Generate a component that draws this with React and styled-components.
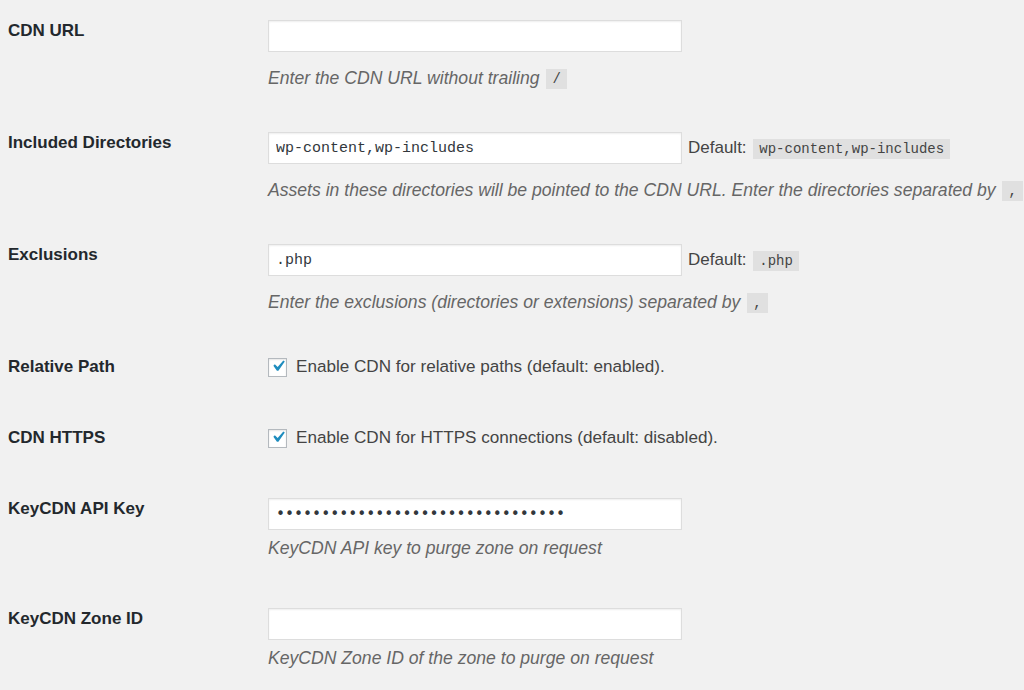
import React from "react";
import styled, { createGlobalStyle } from "styled-components";

const GlobalStyle = createGlobalStyle`
	html, body {
		margin: 0;
		padding: 0;
		background: #f1f1f1;
	}
	body {
		font-family: "Liberation Sans", Arial, sans-serif;
		color: #444;
	}
`;

export default function App() {
	return (
		<>
			<GlobalStyle />
			<FormTable>
				<Row pb={23}>
					<Label>CDN URL</Label>
					<Field>
						<Line>
							<TextInput type="text" value="" readOnly />
						</Line>
						<Description gap={15}>
							Enter the CDN URL without trailing <Code>/</Code>
						</Description>
					</Field>
				</Row>

				<Row pb={23}>
					<Label>Included Directories</Label>
					<Field>
						<Line>
							<TextInput type="text" value="wp-content,wp-includes" readOnly />
							<DefaultNote>
								Default: <Code>wp-content,wp-includes</Code>
							</DefaultNote>
						</Line>
						<Description gap={15}>
							Assets in these directories will be pointed to the CDN URL. Enter
							the directories separated by <Code>,</Code>
						</Description>
					</Field>
				</Row>

				<Row pb={23}>
					<Label>Exclusions</Label>
					<Field>
						<Line>
							<TextInput type="text" value=".php" readOnly />
							<DefaultNote>
								Default: <Code>.php</Code>
							</DefaultNote>
						</Line>
						<Description gap={15}>
							Enter the exclusions (directories or extensions) separated by{" "}
							<Code>,</Code>
						</Description>
					</Field>
				</Row>

				<Row pb={29}>
					<Label>Relative Path</Label>
					<CheckField>
						<Checkbox checked />
						Enable CDN for relative paths (default: enabled).
					</CheckField>
				</Row>

				<Row pb={29}>
					<Label>CDN HTTPS</Label>
					<CheckField>
						<Checkbox checked />
						Enable CDN for HTTPS connections (default: disabled).
					</CheckField>
				</Row>

				<Row pb={29}>
					<Label>KeyCDN API Key</Label>
					<Field>
						<Line>
							<TextInput
								type="password"
								value="a8f3c2e91b7d4f60a5e2c8d1b3f79e04"
								readOnly
							/>
						</Line>
						<Description gap={7}>KeyCDN API key to purge zone on request</Description>
					</Field>
				</Row>

				<Row pb={29}>
					<Label>KeyCDN Zone ID</Label>
					<Field>
						<Line>
							<TextInput type="text" value="" readOnly />
						</Line>
						<Description gap={7}>
							KeyCDN Zone ID of the zone to purge on request
						</Description>
					</Field>
				</Row>
			</FormTable>
		</>
	);
}

function Checkbox({ checked }) {
	return (
		<Box>
			{checked && (
				<Tick width="22" height="22" viewBox="0 0 20 20">
					<path
						d="M14.83 4.89l1.34.94-5.81 8.38H9.02L5.78 9.67l1.34-1.25 2.57 2.4z"
						fill="#1e8cbe"
					/>
				</Tick>
			)}
		</Box>
	);
}

const FormTable = styled.div`
	display: flex;
	flex-direction: column;
	padding-left: 8px;
`;

const Row = styled.div`
	display: grid;
	grid-template-columns: 260px 1fr;
	align-items: start;
	padding-bottom: ${(props) => props.pb}px;
`;

const Label = styled.div`
	padding-top: 20px;
	font-size: 17px;
	line-height: 22px;
	font-weight: bold;
	color: #23282d;
`;

const Field = styled.div`
	padding-top: 20px;
	display: flex;
	flex-direction: column;
`;

const Line = styled.div`
	display: flex;
	align-items: center;
	height: 32px;
`;

const TextInput = styled.input`
	box-sizing: border-box;
	width: 414px;
	height: 32px;
	margin: 0;
	padding: 0 7px;
	border: 1px solid #ddd;
	box-shadow: inset 0 1px 2px rgba(0, 0, 0, 0.07);
	background: #fff;
	font-family: "Liberation Mono", "DejaVu Sans Mono", monospace;
	font-size: 15px;
	color: #32373c;
	outline: none;

	&[type="password"] {
		font-family: "DejaVu Sans Mono", monospace;
		letter-spacing: 0;
	}
`;

const DefaultNote = styled.span`
	margin-left: 6px;
	font-size: 17px;
	line-height: 22px;
	color: #444;
`;

const Code = styled.code`
	display: inline-block;
	padding: 0 6px;
	margin-left: 2px;
	background: rgba(0, 0, 0, 0.07);
	font-family: "Liberation Mono", "DejaVu Sans Mono", monospace;
	font-style: normal;
	font-size: 14px;
	line-height: 20px;
	vertical-align: middle;
	color: #444;
`;

const Description = styled.p`
	margin: ${(props) => props.gap}px 0 0;
	height: 22px;
	font-size: 17.6px;
	line-height: 22px;
	font-style: italic;
	color: #666;
	white-space: nowrap;
`;

const CheckField = styled.label`
	padding-top: 20px;
	display: flex;
	align-items: center;
	gap: 9px;
	height: 22px;
	font-size: 17.1px;
	line-height: 22px;
	color: #444;
`;

const Box = styled.span`
	box-sizing: border-box;
	width: 19px;
	height: 19px;
	display: inline-flex;
	align-items: center;
	justify-content: center;
	border: 1px solid #b4b9be;
	background: #fff;
	box-shadow: inset 0 1px 2px rgba(0, 0, 0, 0.1);
	overflow: visible;
`;

const Tick = styled.svg`
	flex: none;
	margin: -2px -3px 0 -2px;
`;
